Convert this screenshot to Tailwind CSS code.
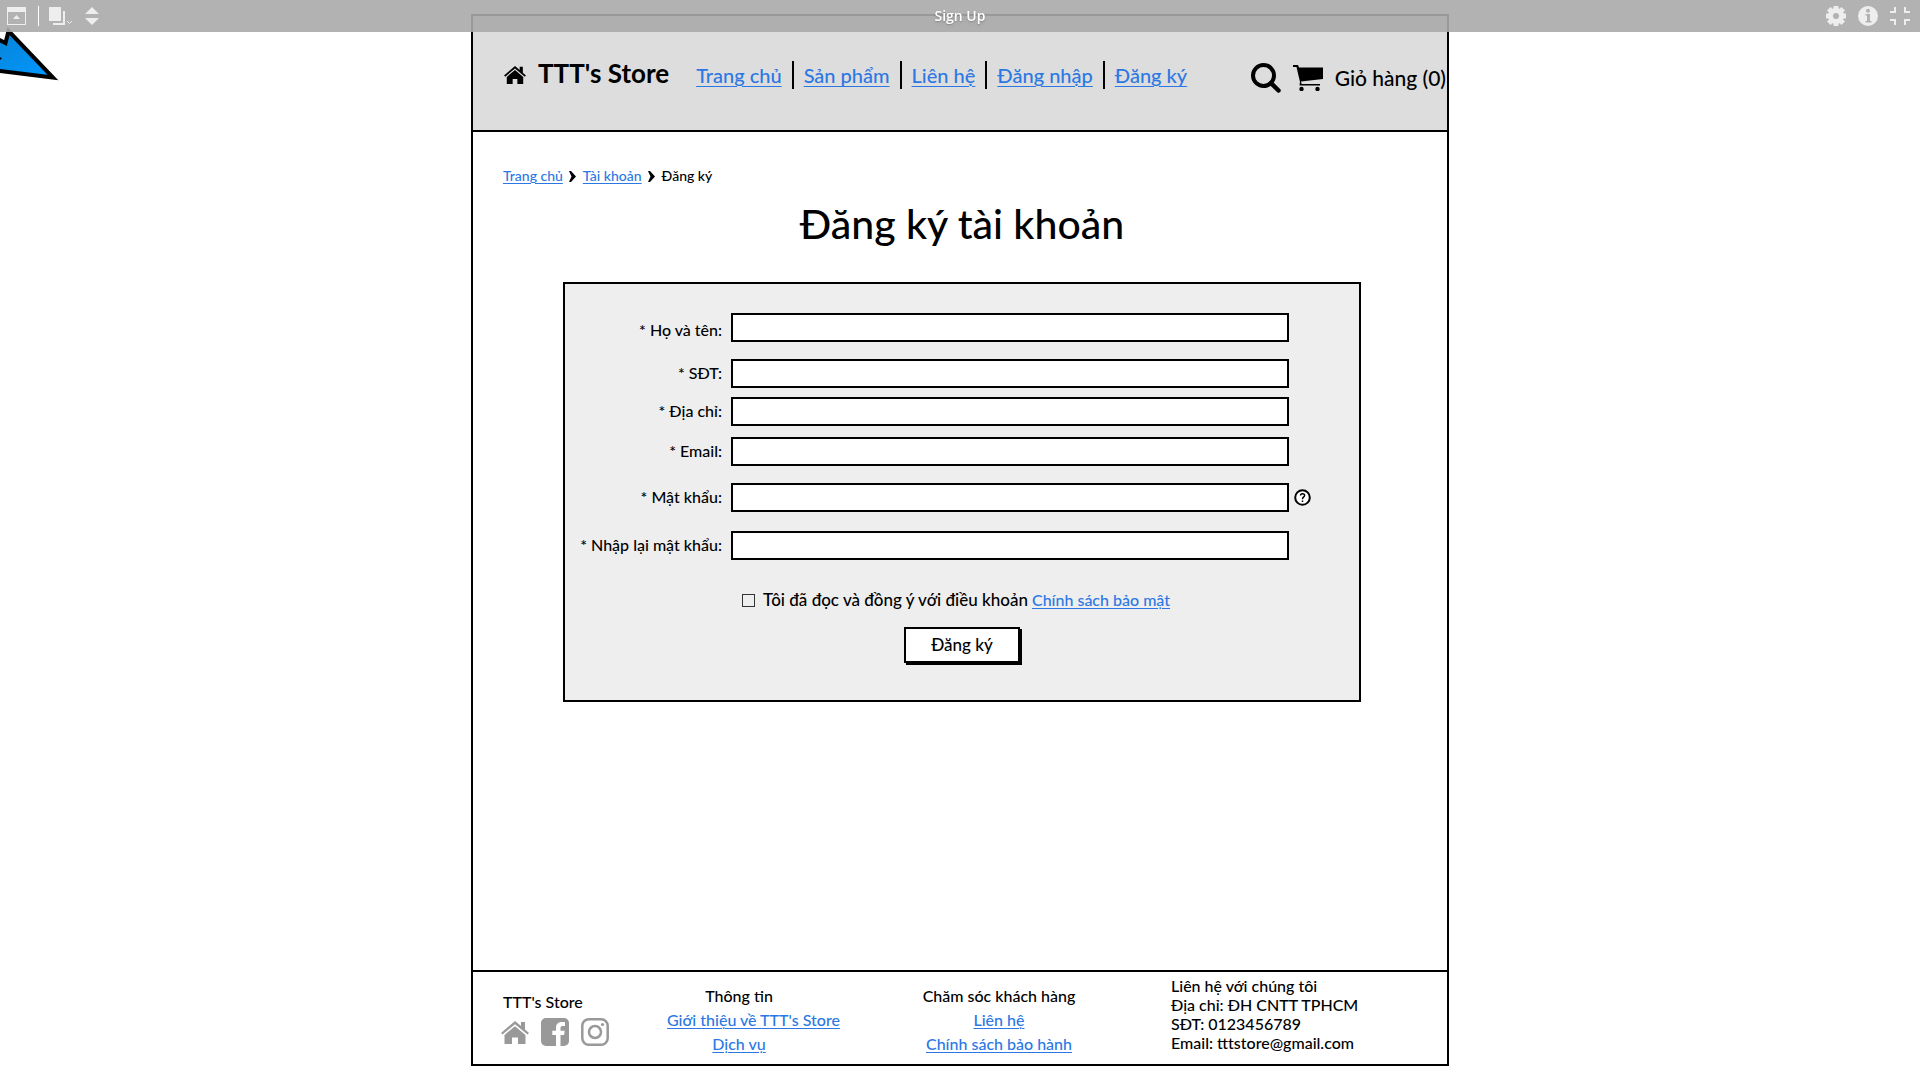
<!DOCTYPE html>
<html lang="vi">
<head>
<meta charset="utf-8">
<meta name="viewport" content="width=device-width, initial-scale=1">
<title>Sign Up</title>
<script src="https://cdn.jsdelivr.net/npm/@tailwindcss/browser@4"></script>
</head>
<body class="bg-white text-black font-medium font-[Lato,sans-serif]">

<!-- Player toolbar, laid over the top of the page -->
<div class="fixed inset-x-0 top-0 z-10 grid h-8 grid-cols-3 items-center bg-[#aaa]/90 text-[#eee]">
  <div class="flex items-center pl-[7px]">
    <button type="button" aria-label="Toggle toolbar"><svg class="block h-[18px] w-[19px]" viewBox="0 0 19 18" fill="currentColor"><path fill-rule="evenodd" d="M0 0h19v18H0zM1 5v12h17V5z"/><path d="M6 12l3.500-4 3.500 4z"/></svg></button>
    <span class="ml-3 h-5 w-px bg-white"></span>
    <button type="button" aria-label="Pages" class="ml-2.5"><svg class="block h-[18px] w-6" viewBox="0 0 24 18" fill="currentColor"><path d="M0 0h12v14H0zM14 4h2v14H4v-2h10z"/><path d="M18 14l2.500 2.500L23 14" fill="none" stroke="currentColor"/></svg></button>
    <button type="button" aria-label="Previous or next" class="ml-3"><svg class="block h-[18px] w-[14px]" viewBox="0 0 14 18" fill="currentColor"><path d="M0 7l7-7 7 7zM0 11h14l-7 7z"/></svg></button>
  </div>
  <p class="text-center font-['Open_Sans',sans-serif] text-sm leading-5 font-semibold text-white text-shadow-md">Sign Up</p>
  <div class="flex items-center justify-end gap-3 pr-2.5">
    <button type="button" aria-label="Settings"><svg class="block size-5" viewBox="0 0 20 20"><circle cx="10" cy="10" r="5.500" fill="none" stroke="currentColor" stroke-width="5"/><g stroke="currentColor" stroke-width="5"><path d="M10 0v4M10 16v4M0 10h4M16 10h4M2.800 2.800l3 3M14.200 14.200l3 3M2.800 17.200l3-3M14.200 5.800l3-3"/></g></svg></button>
    <button type="button" aria-label="Info"><svg class="block size-5" viewBox="0 0 20 20"><circle cx="10" cy="10" r="10" fill="currentColor"/><circle cx="10" cy="4.800" r="2" fill="#b2b2b2"/><path d="M7.500 8H12v7h1.500v1.500h-6V15H9V9.500H7.500z" fill="#b2b2b2"/></svg></button>
    <button type="button" aria-label="Exit full screen"><svg class="block size-5" viewBox="0 0 20 20" fill="none" stroke="currentColor" stroke-width="2"><path d="M0 6h5V1M20 6h-5V1M0 14h5v5M20 14h-5v5"/></svg></button>
  </div>
</div>

<!-- Click pointer -->
<svg class="absolute top-0 left-0 h-[84px] w-16" viewBox="0 0 64 84" aria-hidden="true">
  <defs><linearGradient id="pointer" x1="0" y1="0" x2="1" y2="1"><stop offset="0" stop-color="#0a7fd0"/><stop offset="1" stop-color="#0099ff"/></linearGradient></defs>
  <path d="M8.500 31L53 77.500-20 68.500V30L5.500 43z" fill="url(#pointer)" stroke="#000" stroke-width="4"/>
  <path d="M0 57l2 1.500L0 60z"/>
</svg>

<div class="flex min-h-screen flex-col py-3.5">
<div class="mx-auto flex w-full max-w-[978px] flex-1 flex-col border-2 border-black">

  <header class="flex h-[116px] items-center border-b-2 border-black bg-[#ddd] pt-1 pl-[31px]">
    <svg class="h-[18px] w-[22px] shrink-0" viewBox="0 0 28 23" aria-hidden="true"><use href="#home"/></svg>
    <h2 class="ml-3 pb-1 text-[26px] leading-7 font-bold whitespace-nowrap">TTT's Store</h2>
    <nav class="ml-[27px] flex h-7 items-center divide-x-2 divide-black text-xl leading-7 whitespace-nowrap text-[#2b78e4]">
      <div class="pr-2.5"><a href="#" class="underline decoration-1 underline-offset-3">Trang chủ</a></div>
      <div class="px-2.5"><a href="#" class="underline decoration-1 underline-offset-3">Sản phẩm</a></div>
      <div class="px-2.5"><a href="#" class="underline decoration-1 underline-offset-3">Liên hệ</a></div>
      <div class="px-2.5"><a href="#" class="underline decoration-1 underline-offset-3">Đăng nhập</a></div>
      <div class="pl-2.5"><a href="#" class="underline decoration-1 underline-offset-3">Đăng ký</a></div>
    </nav>
    <button type="button" aria-label="Search" class="ml-auto pt-1.5"><svg class="block size-[30px]" viewBox="0 0 30 30" fill="none" stroke="#000"><circle cx="12.500" cy="12.500" r="10.500" stroke-width="4"/><path d="M20 20l7.500 7.500" stroke-width="4.500" stroke-linecap="round"/></svg></button>
    <a href="#" class="ml-3 flex items-center gap-3 pt-1.5 pr-px text-[21px] leading-7 whitespace-nowrap">
      <svg class="h-[26px] w-[30px]" viewBox="0 0 30 26"><path d="M0 0h5l1 2.500h24V14L8 16.500l.6 2.500H27v1.500H6.500L7 17 3.500 2H0z"/><circle cx="8.500" cy="24" r="2.200"/><circle cx="24.500" cy="24" r="2.200"/></svg>
      Giỏ hàng (0)
    </a>
  </header>

  <main class="flex-1 pt-[34px] pl-1">
    <nav aria-label="Breadcrumb" class="flex items-center pl-[26px] text-sm leading-5">
      <a href="#" class="text-[#2b78e4] underline decoration-1 underline-offset-2">Trang chủ</a>
      <svg class="mx-1.5 h-[11px] w-2" viewBox="0 0 8 11" aria-hidden="true"><path d="M0 0h2l5 5.500L2 11H0l2.500-5.500z"/></svg>
      <a href="#" class="text-[#2b78e4] underline decoration-1 underline-offset-2">Tài khoản</a>
      <svg class="mx-1.5 h-[11px] w-2" viewBox="0 0 8 11" aria-hidden="true"><path d="M0 0h2l5 5.500L2 11H0l2.500-5.500z"/></svg>
      <span>Đăng ký</span>
    </nav>
    <h1 class="mt-2.5 text-center text-[41px] leading-[56px]">Đăng ký tài khoản</h1>

    <form class="mx-auto mt-[30px] flex min-h-[420px] max-w-[798px] flex-col border-2 border-black bg-[#eee] pt-[29px]">
      <div class="mb-[17px] flex items-center"><label for="name" class="w-[157px] pt-1 text-right leading-5">* Họ và tên:</label><input id="name" type="text" class="ml-[9px] h-[29px] w-[558px] border-2 border-black bg-white px-2"></div>
      <div class="mb-[9px] flex items-center"><label for="phone" class="w-[157px] pb-0.5 text-right leading-5">* SĐT:</label><input id="phone" type="tel" class="ml-[9px] h-[29px] w-[558px] border-2 border-black bg-white px-2"></div>
      <div class="mb-[11px] flex items-center"><label for="address" class="w-[157px] pb-0.5 text-right leading-5">* Địa chỉ:</label><input id="address" type="text" class="ml-[9px] h-[29px] w-[558px] border-2 border-black bg-white px-2"></div>
      <div class="mb-[17px] flex items-center"><label for="email" class="w-[157px] pb-0.5 text-right leading-5">* Email:</label><input id="email" type="email" class="ml-[9px] h-[29px] w-[558px] border-2 border-black bg-white px-2"></div>
      <div class="mb-[19px] flex items-center"><label for="password" class="w-[157px] pb-0.5 text-right leading-5">* Mật khẩu:</label><input id="password" type="password" class="ml-[9px] h-[29px] w-[558px] border-2 border-black bg-white px-2"><button type="button" aria-label="Help" class="ml-[5px]"><svg class="block size-[17px]" viewBox="0 0 17 17" fill="none" stroke="#000"><circle cx="8.500" cy="8.500" r="7.300" fill="#fff" stroke-width="2"/><path d="M6.500 6.500C6.500 4 10.700 4 10.600 6.500 10.500 8 8.500 8 8.500 10.200M8.500 11.500v1.500" stroke-width="1.500"/></svg></button></div>
      <div class="flex items-center"><label for="confirm" class="w-[157px] pb-0.5 text-right leading-5 whitespace-nowrap">* Nhập lại mật khẩu:</label><input id="confirm" type="password" class="ml-[9px] h-[29px] w-[558px] border-2 border-black bg-white px-2"></div>
      <div class="mt-[30px] ml-[177px] flex items-center leading-5 whitespace-nowrap">
        <input id="terms" type="checkbox" class="size-[13px] appearance-none border border-[#333] checked:bg-black">
        <label for="terms" class="ml-2 text-[17px]">Tôi đã đọc và đồng ý với điều khoản</label>
        <a href="#" class="ml-1 text-[#2b78e4] underline decoration-1 underline-offset-2">Chính sách bảo mật</a>
      </div>
      <button type="submit" class="mt-[17px] h-9 w-[116px] self-center border-2 border-black bg-white text-[17px] leading-5 shadow-[2px_2px_0_#000]">Đăng ký</button>
    </form>
  </main>

  <footer class="flex h-[94px] items-start border-t-2 border-black leading-6 whitespace-nowrap">
    <div class="w-[194px] pt-[18px] pl-[30px]">
      <p>TTT's Store</p>
      <div class="mt-1 flex items-center gap-3 text-[#999]">
        <a href="#" aria-label="Home" class="-ml-0.5"><svg class="block h-[23px] w-7" viewBox="0 0 28 23" fill="currentColor"><g id="home"><path d="M14 0l6 5V1h4v7.500l4 3.500-1.500 1.600L14 3.200 1.500 13.600 0 12z"/><path d="M14 5.200l10.500 8.700V23H17v-6.500h-6V23H3.500v-9.100z"/></g></svg></a>
        <a href="#" aria-label="Facebook"><svg class="block size-7" viewBox="0 0 28 28" fill="currentColor"><path d="M5 0h18a5 5 0 0 1 5 5v18a5 5 0 0 1-5 5h-3.500V17h3.600l.6-4.200h-4.200V10c0-1.300.4-2 2.100-2H24V4.200c-6-.8-9 1.300-9 5.300v3.300h-3.700V17H15v11H5a5 5 0 0 1-5-5V5a5 5 0 0 1 5-5z"/></svg></a>
        <a href="#" aria-label="Instagram"><svg class="block size-7" viewBox="0 0 28 28" fill="none" stroke="currentColor" stroke-width="2.500"><rect x="1.300" y="1.300" width="25.400" height="25.400" rx="6.500"/><circle cx="14" cy="14" r="6"/><circle cx="21.500" cy="6.500" r="1.600" fill="currentColor" stroke="none"/></svg></a>
      </div>
    </div>
    <div class="flex w-36 flex-col items-center pt-3">
      <p>Thông tin</p>
      <a href="#" class="self-start text-[#2b78e4] underline decoration-1 underline-offset-2">Giới thiệu về TTT's Store</a>
      <a href="#" class="text-[#2b78e4] underline decoration-1 underline-offset-2">Dịch vụ</a>
    </div>
    <div class="ml-[106px] flex w-[164px] flex-col items-center pt-3">
      <p>Chăm sóc khách hàng</p>
      <a href="#" class="text-[#2b78e4] underline decoration-1 underline-offset-2">Liên hệ</a>
      <a href="#" class="text-[#2b78e4] underline decoration-1 underline-offset-2">Chính sách bảo hành</a>
    </div>
    <address class="ml-[90px] pt-1 leading-[19px] not-italic">
      <p>Liên hệ với chúng tôi</p>
      <p>Địa chỉ: ĐH CNTT TPHCM</p>
      <p>SĐT: 0123456789</p>
      <p>Email: tttstore@gmail.com</p>
    </address>
  </footer>

</div>
</div>
</body>
</html>
